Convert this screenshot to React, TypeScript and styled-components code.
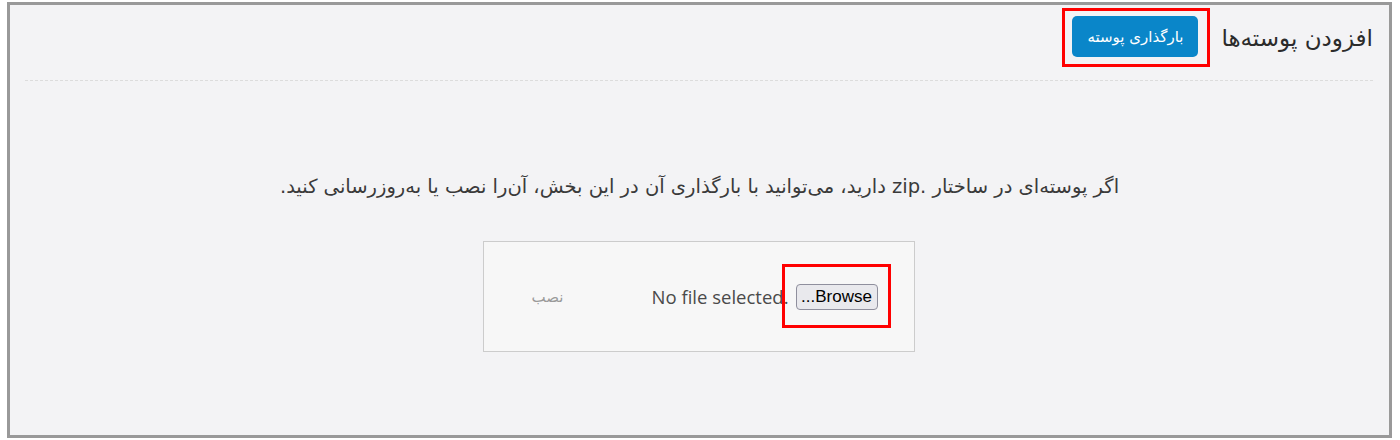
import styled, { createGlobalStyle } from "styled-components";

const GlobalStyle = createGlobalStyle`
    html, body {
        margin: 0;
        padding: 0;
        background: #ffffff;
    }
    body {
        font-family: "DejaVu Sans", "Noto Sans", sans-serif;
    }
`;

const Frame = styled.div`
    box-sizing: border-box;
    margin: 2px 8px 0 7px;
    height: 436px;
    border: 3px solid #999999;
    background: #f3f3f5;
    direction: rtl;
    display: flex;
    flex-direction: column;
`;

const Header = styled.div`
    display: flex;
    align-items: center;
    gap: 11px;
    margin: 0 16px 0 15px;
    padding: 3px 0 13px;
    border-bottom: 1px dashed #dcdcdc;
`;

const Title = styled.h2`
    margin: 0;
    font-size: 23px;
    font-weight: 400;
    color: #2b2b2b;
    font-family: "DejaVu Sans", sans-serif;
`;

const Highlight = styled.div`
    display: inline-flex;
    border: 3px solid #ff0000;
    padding: 5px 9px 7px 7px;
`;

const PrimaryButton = styled.button`
    box-sizing: border-box;
    width: 126px;
    height: 41px;
    border: none;
    border-radius: 5px;
    background: #0a86c9;
    color: #ffffff;
    font-family: "DejaVu Sans", sans-serif;
    font-size: 15px;
    cursor: pointer;
`;

const Body = styled.div`
    flex: 1;
    display: flex;
    flex-direction: column;
    align-items: center;
    padding-top: 94px;
`;

const Intro = styled.p`
    margin: 0 0 43px;
    font-size: 19.5px;
    color: #3a3a3a;
    font-family: "DejaVu Sans", sans-serif;
`;

const UploadBox = styled.div`
    box-sizing: border-box;
    width: 432px;
    height: 111px;
    margin-right: 2px;
    border: 1px solid #cccccc;
    background: #f7f7f7;
    display: flex;
    align-items: center;
    justify-content: space-between;
    padding: 0 36px 0 48px;
`;

const FileField = styled.div`
    display: flex;
    align-items: center;
    gap: 7px;
`;

const BrowseWrap = styled.div`
    position: relative;
    display: inline-flex;
    &::after {
        content: "";
        position: absolute;
        top: -20px;
        bottom: -18px;
        left: -14px;
        right: -13px;
        border: 3px solid #ff0000;
        pointer-events: none;
    }
`;

const BrowseButton = styled.button`
    box-sizing: border-box;
    width: 82px;
    height: 26px;
    padding: 0;
    border: 1px solid #8f8f9d;
    border-radius: 4px;
    background: #e9e9ed;
    color: #000000;
    font-family: "Liberation Sans", Arial, sans-serif;
    font-size: 17px;
`;

const FileStatus = styled.span`
    direction: ltr;
    font-family: "Open Sans", "Liberation Sans", sans-serif;
    font-size: 18.5px;
    color: #4a4a4a;
`;

const InstallLabel = styled.span`
    font-size: 15px;
    color: #9a9a9a;
    font-family: "DejaVu Sans", sans-serif;
`;

export default function App() {
    return (
        <>
            <GlobalStyle />
            <Frame>
                <Header>
                    <Title>افزودن پوسته‌ها</Title>
                    <Highlight>
                        <PrimaryButton>بارگذاری پوسته</PrimaryButton>
                    </Highlight>
                </Header>
                <Body>
                    <Intro>
                        اگر پوسته‌ای در ساختار .zip دارید، می‌توانید با بارگذاری آن در این بخش، آن‌را نصب یا به‌روزرسانی کنید.
                    </Intro>
                    <UploadBox>
                        <FileField>
                            <BrowseWrap>
                                <BrowseButton>Browse...</BrowseButton>
                            </BrowseWrap>
                            <FileStatus>No file selected.</FileStatus>
                        </FileField>
                        <InstallLabel>نصب</InstallLabel>
                    </UploadBox>
                </Body>
            </Frame>
        </>
    );
}
